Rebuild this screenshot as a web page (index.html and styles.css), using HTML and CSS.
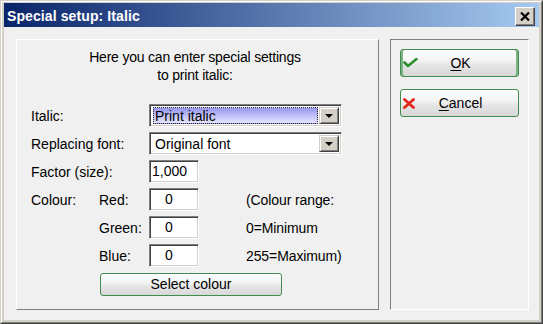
FILE: index.html
```html
<!DOCTYPE html>
<html>
<head>
<meta charset="utf-8">
<link rel="stylesheet" href="styles.css">
</head>
<body>
<div class="window">
  <div class="frame">
    <div class="titlebar">
      <span class="title">Special setup: Italic</span>
      <div class="close">
        <svg width="10" height="9" viewBox="0 0 10 9"><path d="M1 0.5 L9 8.5 M9 0.5 L1 8.5" stroke="#000" stroke-width="2.2" fill="none"/></svg>
      </div>
    </div>
    <div class="body">
      <div class="panel-left">
        <p class="intro">Here you can enter special settings<br>to print italic:</p>
        <div class="rows">
          <div class="row">
            <span class="lbl lbl-wide">Italic:</span>
            <div class="combo">
              <div class="combo-val sel">Print italic</div>
              <div class="drop"><span class="arrow"></span></div>
            </div>
          </div>
          <div class="row">
            <span class="lbl lbl-wide">Replacing font:</span>
            <div class="combo">
              <div class="combo-val">Original font</div>
              <div class="drop"><span class="arrow"></span></div>
            </div>
          </div>
          <div class="row">
            <span class="lbl lbl-wide">Factor (size):</span>
            <div class="field left">1,000</div>
          </div>
          <div class="row">
            <span class="lbl lbl-a">Colour:</span>
            <span class="lbl lbl-b">Red:</span>
            <div class="field num">0</div>
            <span class="note">(Colour range:</span>
          </div>
          <div class="row">
            <span class="lbl lbl-a"></span>
            <span class="lbl lbl-b">Green:</span>
            <div class="field num">0</div>
            <span class="note">0=Minimum</span>
          </div>
          <div class="row">
            <span class="lbl lbl-a"></span>
            <span class="lbl lbl-b">Blue:</span>
            <div class="field num">0</div>
            <span class="note">255=Maximum)</span>
          </div>
        </div>
        <div class="btn btn-select">Select colour</div>
      </div>
      <div class="panel-right">
        <div class="btn btn-side btn-default">
          <svg class="ico" width="15" height="10" viewBox="0 0 15 10"><path d="M1.5 4.5 L5 8 L13.5 1" stroke="#2f8f2f" stroke-width="2.6" fill="none" stroke-linejoin="round" stroke-linecap="round"/></svg>
          <span class="btn-text"><u>O</u>K</span>
          <span></span>
        </div>
        <div class="btn btn-side">
          <svg class="ico" width="12" height="11" viewBox="0 0 12 11"><path d="M1.5 1.5 L10.5 9.5 M10.5 1.5 L1.5 9.5" stroke="#e3261a" stroke-width="2.8" fill="none" stroke-linecap="round"/></svg>
          <span class="btn-text"><u>C</u>ancel</span>
          <span></span>
        </div>
      </div>
    </div>
  </div>
</div>
</body>
</html>
```

FILE: styles.css
```css
html, body {
  margin: 0;
  padding: 0;
  background: #ffffff;
}

.window {
  width: 543px;
  height: 324px;
  box-sizing: border-box;
  border: 1px solid;
  border-color: #d4d0c8 #404040 #404040 #d4d0c8;
  font-family: "Liberation Sans", Arial, sans-serif;
  font-size: 14px;
  color: #000;
}

.frame {
  height: 100%;
  box-sizing: border-box;
  border: 1px solid;
  border-color: #ffffff #808080 #808080 #ffffff;
  padding: 1px 2px 2px 2px;
  background: #d4d0c8;
  display: flex;
  flex-direction: column;
}

.titlebar {
  height: 24px;
  flex: none;
  display: flex;
  align-items: center;
  justify-content: space-between;
  padding: 0 4px 0 3px;
  background: linear-gradient(to right, #0a246a, #a6caf0);
}

.title {
  color: #fff;
  font-weight: bold;
  font-size: 14px;
  line-height: 18px;
  padding-top: 2px;
  letter-spacing: 0.1px;
}

.close {
  width: 20px;
  height: 19px;
  box-sizing: border-box;
  background: #d4d0c8;
  border: 1px solid;
  border-color: #ffffff #404040 #404040 #ffffff;
  box-shadow: inset -1px -1px 0 #808080;
  display: flex;
  align-items: center;
  justify-content: center;
  margin-top: 2px;
}

.body {
  flex: 1;
  background: #f0f0f0;
  display: flex;
  gap: 11px;
  padding: 12px 10px 10px 12px;
}

.panel-left {
  width: 363px;
  box-sizing: border-box;
  border: 1px solid;
  border-color: #ffffff #808080 #808080 #ffffff;
  padding: 8px 0 0 14px;
}

.intro {
  margin: 0;
  line-height: 18px;
  text-align: center;
  padding-right: 19px;
  letter-spacing: -0.2px;
}

.rows {
  margin-top: 20px;
  display: flex;
  flex-direction: column;
  gap: 5px;
}

.row {
  height: 23px;
  display: flex;
  align-items: center;
}

.lbl {
  line-height: 18px;
  padding-top: 1px;
  flex: none;
}

.lbl-wide { width: 118px; }
.lbl-a { width: 68px; }
.lbl-b { width: 50px; }

.note {
  margin-left: 47px;
  line-height: 18px;
  padding-top: 1px;
  letter-spacing: -0.1px;
}

.combo {
  width: 193px;
  height: 23px;
  box-sizing: border-box;
  border: 1px solid;
  border-color: #808080 #ffffff #ffffff #808080;
  box-shadow: inset 1px 1px 0 #404040, inset -1px -1px 0 #d4d0c8;
  padding: 2px;
  background: #fff;
  display: flex;
  gap: 1px;
}

.combo-val {
  flex: 1;
  box-sizing: border-box;
  margin: 0 0 0 1px;
  padding: 0 0 0 1px;
  line-height: 17px;
  border: 1px solid transparent;
}

.combo-val.sel {
  background: linear-gradient(#9696f0, #e6e6fe);
  border: 1px dotted #222;
}

.drop {
  width: 20px;
  flex: none;
  box-sizing: border-box;
  background: #d4d0c8;
  border: 1px solid;
  border-color: #d4d0c8 #404040 #404040 #d4d0c8;
  box-shadow: inset 1px 1px 0 #ffffff, inset -1px -1px 0 #808080;
  display: flex;
  align-items: center;
  justify-content: center;
}

.arrow {
  width: 0;
  height: 0;
  border-left: 4px solid transparent;
  border-right: 4px solid transparent;
  border-top: 4px solid #000;
  margin-top: 1px;
}

.field {
  width: 50px;
  height: 23px;
  box-sizing: border-box;
  border: 1px solid;
  border-color: #808080 #ffffff #ffffff #808080;
  box-shadow: inset 1px 1px 0 #404040, inset -1px -1px 0 #d4d0c8;
  background: #fff;
  line-height: 19px;
  padding-top: 1px;
  flex: none;
}

.field.left { padding-left: 2px; }
.field.num { padding-left: 15px; }

.btn {
  box-sizing: border-box;
  border: 1px solid #3f8c4c;
  border-radius: 3px;
  background: linear-gradient(#ffffff, #f4f4f4 40%, #e4e4e4 60%, #d8d8d8);
  text-align: center;
  cursor: default;
}

.btn-select {
  margin-top: 6px;
  margin-left: 69px;
  width: 182px;
  height: 23px;
  line-height: 20px;
}

.panel-right {
  width: 139px;
  box-sizing: border-box;
  border: 1px solid;
  border-color: #808080 #ffffff #ffffff #808080;
  padding: 9px 0 0 9px;
  display: flex;
  flex-direction: column;
  gap: 12px;
}

.btn-side {
  width: 119px;
  height: 28px;
  display: grid;
  grid-template-columns: 22px 1fr 22px;
  align-items: center;
  padding: 0 0 0 2px;
}

.btn-default {
  box-shadow: inset 2px 0 0 #79b37f, inset -2px 0 0 #79b37f;
}

.ico { display: block; }

.btn-text {
  line-height: 18px;
  text-align: center;
}

.btn-text u {
  text-underline-offset: 2px;
}
```
